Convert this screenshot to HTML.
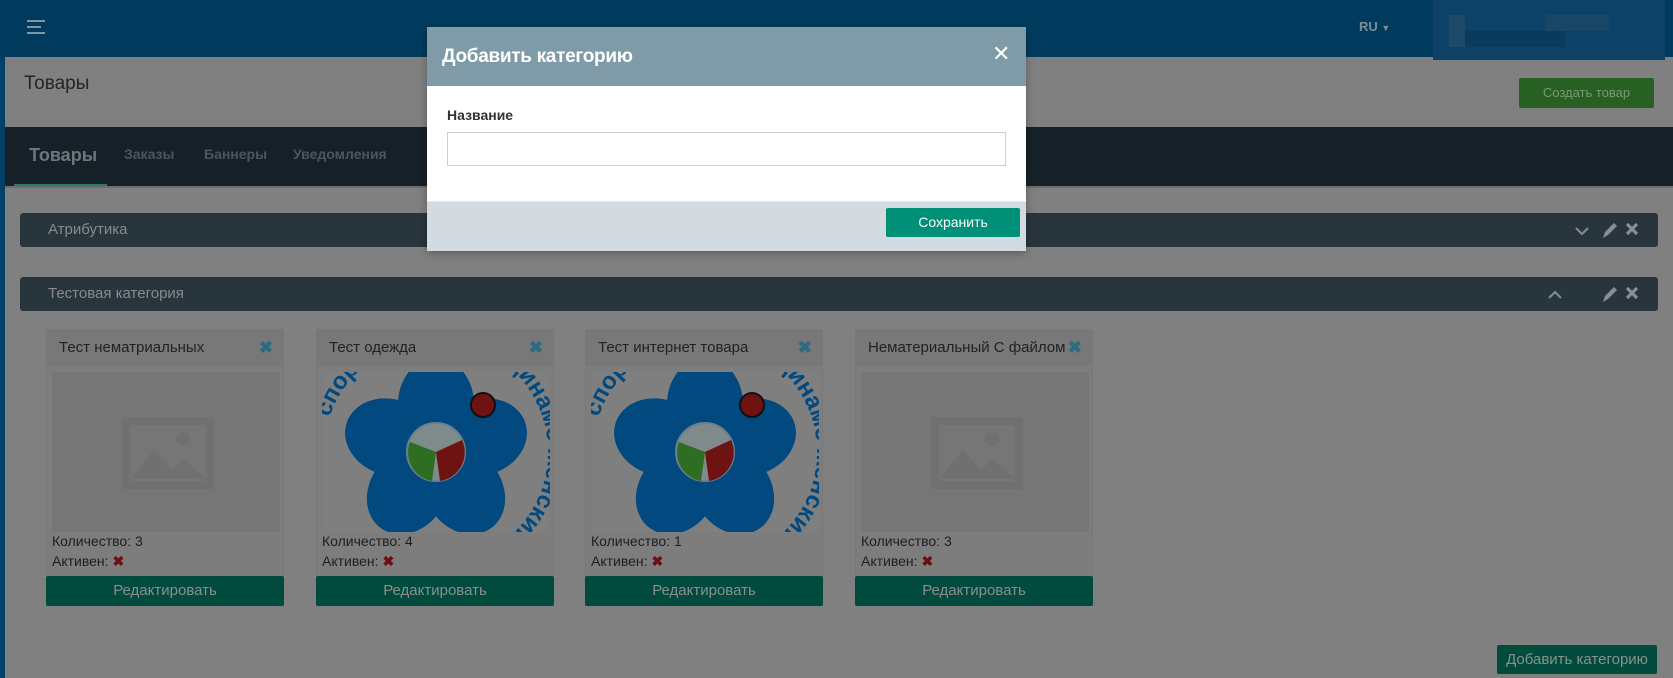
<!DOCTYPE html>
<html><head><meta charset="utf-8">
<style>
*{box-sizing:border-box;margin:0;padding:0}
body{width:1673px;height:678px;overflow:hidden;background:#808080;font-family:"Liberation Sans",sans-serif;position:relative}
.a{position:absolute}
.hdr{left:0;top:0;width:1673px;height:57px;background:#003b5e}
.lstripe{left:0;top:57px;width:5px;height:621px;background:#003f66}
.tabs{left:5px;top:127px;width:1668px;height:59px;background:#162127}
.tab{top:146px;font-size:14px;font-weight:bold;color:#4b565d}
.panel{left:20px;width:1638px;height:34px;background:#29353c;border-radius:3px;color:#8a8a8a;font-size:15px;line-height:34px;padding-left:28px}
.card{width:238px;height:277px;background:#7d7d7d;border:1px solid #787878}
.ch{position:absolute;left:0;top:0;width:100%;height:36px;background:#787878;font-size:15px;color:#222;line-height:36px;padding-left:12px}
.cx{position:absolute;right:10px;top:0;color:#2e6b80;font-size:17px;font-weight:bold}
.img{position:absolute;left:5px;top:42px;width:228px;height:160px;background:#767676;overflow:hidden}
.t{position:absolute;left:5px;font-size:14px;color:#1e1e1e}
.rx{color:#6e0f0f;font-weight:bold}
.btn{position:absolute;left:-1px;top:246px;width:238px;height:30px;background:#004b3e;color:#8a8f8d;font-size:15px;text-align:center;line-height:30px;border-radius:2px}
</style></head><body>
<div class="a hdr"></div>
<div class="a lstripe"></div>
<div class="a" style="left:27px;top:20px;width:18px;height:2px;background:#8096a5"></div>
<div class="a" style="left:27px;top:26px;width:14px;height:2px;background:#8096a5"></div>
<div class="a" style="left:27px;top:32px;width:18px;height:2px;background:#8096a5"></div>
<div class="a" style="left:1359px;top:19px;font-size:13px;font-weight:bold;color:#7c8d99">RU <span style="font-size:9px">▼</span></div>
<div class="a" style="left:1433px;top:0;width:232px;height:60px;background:#0d4266"></div>
<div class="a" style="left:1449px;top:15px;width:16px;height:32px;background:#1e4a69"></div>
<div class="a" style="left:1545px;top:15px;width:64px;height:16px;background:#174666"></div>
<div class="a" style="left:1465px;top:31px;width:100px;height:16px;background:#0a3b5c"></div>

<div class="a" style="left:24px;top:73px;font-size:19px;color:#252525">Товары</div>
<div class="a" style="left:1519px;top:78px;width:135px;height:30px;background:#285f23;border-radius:2px;color:#799a76;font-size:13px;text-align:center;line-height:30px">Создать товар</div>

<div class="a tabs"></div>
<div class="a" style="left:29px;top:145px;font-size:18px;font-weight:bold;color:#6d767c">Товары</div>
<div class="a" style="left:14px;top:184px;width:93px;height:3px;background:#2b7a6b"></div>
<div class="a tab" style="left:124px">Заказы</div>
<div class="a tab" style="left:204px">Баннеры</div>
<div class="a tab" style="left:293px">Уведомления</div>
<div class="a" style="left:5px;top:186px;width:1668px;height:2px;background:#6e6e6e"></div>

<div class="a panel" style="top:213px">Атрибутика</div>
<div class="a panel" style="top:277px">Тестовая категория</div>
<svg class="a" style="left:1540px;top:219px" width="120" height="88" viewBox="0 0 120 88">
 <g fill="none" stroke="#7d8a90" stroke-width="2.2">
  <path d="M36 9 L42 15 L48 9"/>
  <path d="M9 79 L15 73 L21 79"/>
 </g>
 <g fill="#8a8f92">
  <path d="M63 19 L65 13 L74 4 L77 7 L68 16 Z"/>
  <path d="M63 83 L65 77 L74 68 L77 71 L68 80 Z"/>
 </g>
 <g stroke="#8a8f92" stroke-width="3.2">
  <path d="M87 5 L97 15 M97 5 L87 15"/>
  <path d="M87 69 L97 79 M97 69 L87 79"/>
 </g>
</svg>

<!-- cards -->
<div class="a card" style="left:46px;top:329px">
 <div class="ch">Тест нематриальных<span class="cx">✖</span></div>
 <div class="img"><svg width="228" height="160"><rect x="70" y="45" width="92" height="72" fill="#707070"/><rect x="78" y="53" width="76" height="56" fill="#767676"/><path d="M78 107 L102 78 L120 98 L132 87 L154 107Z" fill="#707070"/><circle cx="131" cy="67" r="7" fill="#707070"/></svg></div>
 <div class="t" style="top:203px">Количество: 3</div>
 <div class="t" style="top:223px">Активен: <span class="rx">✖</span></div>
 <div class="btn">Редактировать</div>
</div>
<div class="a card" style="left:316px;top:329px">
 <div class="ch">Тест одежда<span class="cx">✖</span></div>
 <div class="img" style="background:#7f7f7f"><svg width="228" height="160" viewBox="0 0 228 160">
  <defs><path id="rg" d="M114 172 m-112 -92 a112 112 0 1 1 224 0 a112 112 0 1 1 -224 0"/></defs>
  <g fill="#01497f" transform="translate(114 80)">
   <ellipse cx="0" cy="-48" rx="38" ry="46"/>
   <ellipse cx="0" cy="-48" rx="38" ry="46" transform="rotate(72)"/>
   <ellipse cx="0" cy="-48" rx="38" ry="46" transform="rotate(144)"/>
   <ellipse cx="0" cy="-48" rx="38" ry="46" transform="rotate(216)"/>
   <ellipse cx="0" cy="-48" rx="38" ry="46" transform="rotate(288)"/>
  </g>
  <text font-size="24" font-weight="bold" fill="#01497f" font-family="Liberation Sans,sans-serif"><textPath href="#rg" startOffset="5%">спортивный клуб динамо женский волейбол</textPath></text>
  <circle cx="114" cy="80" r="29" fill="#7f8a8a" stroke="#6a7f8f" stroke-width="2"/>
  <path d="M114 80 L88 70 A29 29 0 0 0 110 109 Z" fill="#2d6e22"/>
  <path d="M114 80 L140 68 A29 29 0 0 1 118 109 Z" fill="#6e1212"/>
  <circle cx="161" cy="33" r="12" fill="#6e1212" stroke="#111" stroke-width="2"/>
 </svg></div>
 <div class="t" style="top:203px">Количество: 4</div>
 <div class="t" style="top:223px">Активен: <span class="rx">✖</span></div>
 <div class="btn">Редактировать</div>
</div>
<div class="a card" style="left:585px;top:329px">
 <div class="ch">Тест интернет товара<span class="cx">✖</span></div>
 <div class="img" style="background:#7f7f7f"><svg width="228" height="160" viewBox="0 0 228 160">
  <defs><path id="rg2" d="M114 172 m-112 -92 a112 112 0 1 1 224 0 a112 112 0 1 1 -224 0"/></defs>
  <g fill="#01497f" transform="translate(114 80)">
   <ellipse cx="0" cy="-48" rx="38" ry="46"/>
   <ellipse cx="0" cy="-48" rx="38" ry="46" transform="rotate(72)"/>
   <ellipse cx="0" cy="-48" rx="38" ry="46" transform="rotate(144)"/>
   <ellipse cx="0" cy="-48" rx="38" ry="46" transform="rotate(216)"/>
   <ellipse cx="0" cy="-48" rx="38" ry="46" transform="rotate(288)"/>
  </g>
  <text font-size="24" font-weight="bold" fill="#01497f" font-family="Liberation Sans,sans-serif"><textPath href="#rg2" startOffset="5%">спортивный клуб динамо женский волейбол</textPath></text>
  <circle cx="114" cy="80" r="29" fill="#7f8a8a" stroke="#6a7f8f" stroke-width="2"/>
  <path d="M114 80 L88 70 A29 29 0 0 0 110 109 Z" fill="#2d6e22"/>
  <path d="M114 80 L140 68 A29 29 0 0 1 118 109 Z" fill="#6e1212"/>
  <circle cx="161" cy="33" r="12" fill="#6e1212" stroke="#111" stroke-width="2"/>
 </svg></div>
 <div class="t" style="top:203px">Количество: 1</div>
 <div class="t" style="top:223px">Активен: <span class="rx">✖</span></div>
 <div class="btn">Редактировать</div>
</div>
<div class="a card" style="left:855px;top:329px">
 <div class="ch">Нематериальный С файлом<span class="cx">✖</span></div>
 <div class="img"><svg width="228" height="160"><rect x="70" y="45" width="92" height="72" fill="#707070"/><rect x="78" y="53" width="76" height="56" fill="#767676"/><path d="M78 107 L102 78 L120 98 L132 87 L154 107Z" fill="#707070"/><circle cx="131" cy="67" r="7" fill="#707070"/></svg></div>
 <div class="t" style="top:203px">Количество: 3</div>
 <div class="t" style="top:223px">Активен: <span class="rx">✖</span></div>
 <div class="btn">Редактировать</div>
</div>

<div class="a" style="left:1497px;top:645px;width:160px;height:29px;background:#004b3c;border-radius:2px;color:#8a908d;font-size:15px;text-align:center;line-height:29px">Добавить категорию</div>

<!-- modal -->
<div class="a" style="left:427px;top:27px;width:599px;height:224px;box-shadow:0 2px 8px rgba(0,0,0,.3)">
 <div class="a" style="left:0;top:0;width:599px;height:59px;background:#7f9ba7"></div>
 <div class="a" style="left:15px;top:19px;font-size:19px;font-weight:bold;color:#fff;letter-spacing:-0.3px">Добавить категорию</div>
 <div class="a" style="left:565px;top:14px;font-size:22px;color:#fff">✕</div>
 <div class="a" style="left:0;top:59px;width:599px;height:115px;background:#fff"></div>
 <div class="a" style="left:20px;top:80px;font-size:14px;font-weight:bold;color:#333">Название</div>
 <div class="a" style="left:20px;top:105px;width:559px;height:34px;border:1px solid #ccd0d6;background:#fff"></div>
 <div class="a" style="left:0;top:174px;width:599px;height:50px;background:#d3dae0;border-top:1px solid #e4e8ec"></div>
 <div class="a" style="left:459px;top:181px;width:134px;height:29px;background:#009077;border-radius:2px;color:#fff;font-size:14px;text-align:center;line-height:29px">Сохранить</div>
</div>
</body></html>
